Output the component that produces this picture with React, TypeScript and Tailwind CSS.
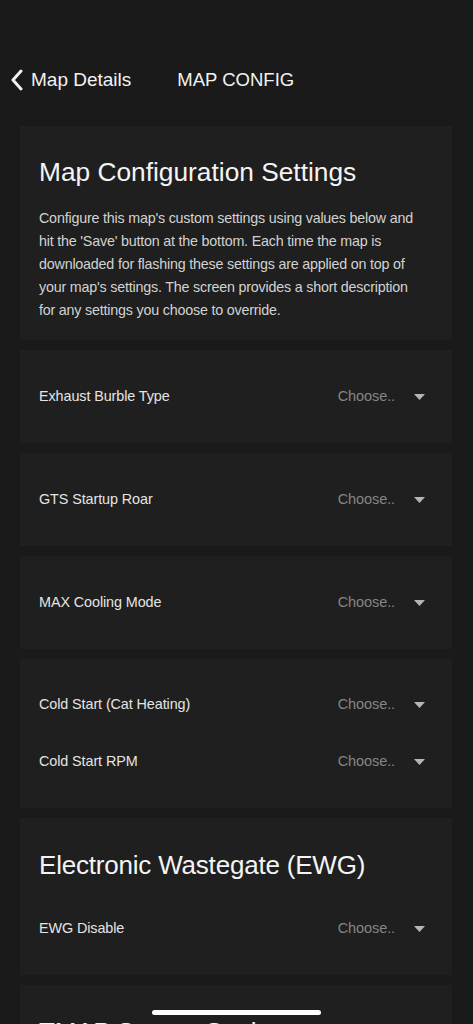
const font = { fontFamily: '"Liberation Sans", Arial, sans-serif' };

function Caret() {
  return (
    <svg width="11" height="6" viewBox="0 0 11 6" className="shrink-0">
      <path d="M0 0 H11 L5.5 6 Z" fill="#b5b5b5" />
    </svg>
  );
}

function SelectRow({ label }: { label: string }) {
  return (
    <div className="flex h-[57px] items-center justify-between">
      <span className="text-[14.4px] tracking-[-0.1px] text-[#e4e4e4]">{label}</span>
      <div className="flex items-center gap-[19px]">
        <span className="text-[14.5px] tracking-[-0.1px] text-[#858585]">Choose..</span>
        <Caret />
      </div>
    </div>
  );
}

function Card({ children, className = "" }: { children: React.ReactNode; className?: string }) {
  return (
    <div className={`ml-5 mr-[21px] bg-[#1f1f1f] pl-[19px] pr-[27px] ${className}`}>
      {children}
    </div>
  );
}

export default function App() {
  return (
    <div className="relative h-[1024px] overflow-hidden bg-[#1a1a1a]" style={font}>
      <header className="flex h-[126px] items-start pt-[68px]">
        <div className="flex items-center pl-[10px]">
          <svg width="14" height="22" viewBox="0 0 14 22">
            <path d="M11 2 L3 11 L11 20" fill="none" stroke="#f2f2f2" strokeWidth="3" strokeLinecap="round" strokeLinejoin="round" />
          </svg>
          <span className="ml-[7px] text-[19px] leading-[24px] text-[#f2f2f2]">Map Details</span>
        </div>
        <span className="ml-[46px] text-[18.5px] leading-[24px] text-[#f2f2f2]">MAP CONFIG</span>
      </header>

      <div className="flex flex-col gap-[10px]">
        <Card className="pt-[30px] pb-[18px] pr-[12px]">
          <h1 className="text-[26.3px] leading-[32px] text-[#f4f4f4]">Map Configuration Settings</h1>
          <p className="mt-[19px] text-[14.3px] leading-[23px] tracking-[-0.2px] text-[#d2d2d2]">
            Configure this map's custom settings using values below and hit the 'Save' button at the bottom. Each time the map is downloaded for flashing these settings are applied on top of your map's settings. The screen provides a short description for any settings you choose to override.
          </p>
        </Card>

        <Card className="py-[18px]">
          <SelectRow label="Exhaust Burble Type" />
        </Card>
        <Card className="py-[18px]">
          <SelectRow label="GTS Startup Roar" />
        </Card>
        <Card className="py-[18px]">
          <SelectRow label="MAX Cooling Mode" />
        </Card>
        <Card className="py-[17.5px]">
          <SelectRow label="Cold Start (Cat Heating)" />
          <SelectRow label="Cold Start RPM" />
        </Card>

        <Card className="pt-[31px] pb-[17.5px]">
          <h2 className="text-[26px] leading-[32px] tracking-[-0.2px] text-[#f4f4f4]">Electronic Wastegate (EWG)</h2>
          <div className="mt-[19.5px]">
            <SelectRow label="EWG Disable" />
          </div>
        </Card>

        <Card className="pt-[31px] pb-[17.5px]">
          <h2 className="text-[26px] leading-[32px] tracking-[-0.2px] text-[#f4f4f4]">TMAP Sensor Settings</h2>
        </Card>
      </div>

      <div className="absolute bottom-[9px] left-[152px] h-[5px] w-[169px] rounded-full bg-white" />
    </div>
  );
}
